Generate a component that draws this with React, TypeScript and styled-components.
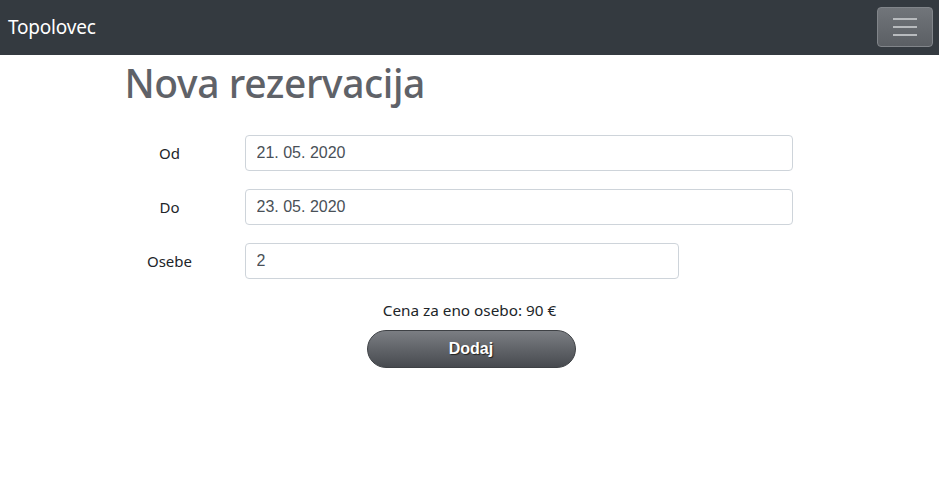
import React from "react";
import styled, { createGlobalStyle } from "styled-components";

const Global = createGlobalStyle`
  html, body { margin: 0; padding: 0; background: #fff; }
  body { font-family: "Noto Sans", "Open Sans", sans-serif; color: #212529; }
  * { box-sizing: border-box; }
`;

const NavBar = styled.nav`
  height: 55px;
  background: #343a40;
  display: flex;
  align-items: center;
  justify-content: space-between;
  padding: 0 6px 1px 8px;
`;

const Brand = styled.a`
  color: #fff;
  font-size: 19px;
  font-family: "Noto Sans", sans-serif;
  text-decoration: none;
  letter-spacing: -0.2px;
`;

const Toggler = styled.button`
  width: 56px;
  height: 40px;
  border-radius: 4px;
  border: 1px solid #81858a;
  background: linear-gradient(#71757a, #5b5f64);
  display: flex;
  flex-direction: column;
  align-items: center;
  justify-content: center;
  gap: 6px;
  padding: 0;
  margin-top: -1px;
`;

const Bar = styled.span`
  display: block;
  width: 24px;
  height: 2px;
  background: #b8bbbe;
`;

const Container = styled.main`
  width: 720px;
  margin: 0 auto;
  padding: 0 15px;
`;

const Title = styled.h1`
  margin: 4px 0 28px 0;
  font-size: 39px;
  font-weight: 500;
  color: #5f6268;
  line-height: 48px;
  letter-spacing: -0.4px;
`;

const Form = styled.form`
  display: flex;
  flex-direction: column;
  gap: 18px;
`;

const Row = styled.div`
  display: grid;
  grid-template-columns: 90px 1fr;
  column-gap: 30px;
  align-items: center;
`;

const Label = styled.label`
  text-align: center;
  font-size: 15px;
  color: #212529;
`;

const Input = styled.input<{ $w: number }>`
  width: ${(p) => p.$w}px;
  height: 36px;
  border: 1px solid #ced4da;
  border-radius: 4px;
  padding: 0 11px;
  font-family: "Liberation Sans", Arial, sans-serif;
  font-size: 16px;
  color: #495057;
  background: #fff;
  outline: none;
`;

const Footer = styled.div`
  display: flex;
  flex-direction: column;
  align-items: center;
  margin-top: 20px;
  gap: 9px;
`;

const Price = styled.p`
  margin: 0;
  font-size: 15.3px;
  color: #212529;
  line-height: 22px;
`;

const Submit = styled.button`
  width: 209px;
  height: 38px;
  margin-left: 3px;
  border-radius: 19px;
  border: 1px solid #3e4145;
  background: linear-gradient(#7b7e83, #474a4f);
  color: #fff;
  font-family: "Liberation Sans", Arial, sans-serif;
  font-weight: bold;
  font-size: 16px;
  text-shadow: 1px 1px 1px #222;
  cursor: pointer;
`;

export default function App() {
  return (
    <>
      <Global />
      <NavBar>
        <Brand href="#">Topolovec</Brand>
        <Toggler type="button" aria-label="menu">
          <Bar />
          <Bar />
          <Bar />
        </Toggler>
      </NavBar>
      <Container>
        <Title>Nova rezervacija</Title>
        <Form onSubmit={(e) => e.preventDefault()}>
          <Row>
            <Label>Od</Label>
            <Input $w={548} defaultValue="21. 05. 2020" />
          </Row>
          <Row>
            <Label>Do</Label>
            <Input $w={548} defaultValue="23. 05. 2020" />
          </Row>
          <Row>
            <Label>Osebe</Label>
            <Input $w={434} defaultValue="2" />
          </Row>
        </Form>
        <Footer>
          <Price>Cena za eno osebo: 90 €</Price>
          <Submit type="button">Dodaj</Submit>
        </Footer>
      </Container>
    </>
  );
}
